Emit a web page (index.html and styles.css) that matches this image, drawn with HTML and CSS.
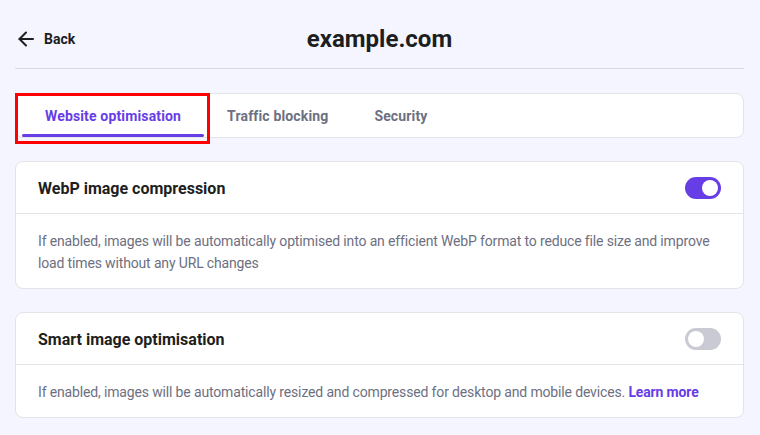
FILE: index.html
```html
<!DOCTYPE html>
<html lang="en">

<head>
    <meta charset="UTF-8">
    <meta name="viewport" content="width=device-width, initial-scale=1.0">
    <title>example.com - Image optimisation</title>
    <link rel="stylesheet" href="styles.css">
</head>

<body>
    <div class="page">
        <div class="topbar">
            <a class="back" href="#">
                <svg width="16" height="16" viewBox="0 0 16 16" fill="none" stroke="#1d1e20" stroke-width="2"
                    stroke-linecap="round" stroke-linejoin="round">
                    <path d="M15 8H1.5" />
                    <path d="M8 1.5L1.5 8L8 14.5" />
                </svg>
                <span>Back</span>
            </a>
            <h1 class="title">example.com</h1>
            <div></div>
        </div>

        <div class="tabs">
            <div class="tab active">Website optimisation<span class="mark"></span></div>
            <div class="tab">Traffic blocking</div>
            <div class="tab">Security</div>
        </div>

        <div class="card">
            <div class="card-head">
                <h2>WebP image compression</h2>
                <span class="switch on"></span>
            </div>
            <p class="card-body">If enabled, images will be automatically optimised into an efficient WebP format to
                reduce file size and improve load times without any URL changes</p>
        </div>

        <div class="card">
            <div class="card-head">
                <h2>Smart image optimisation</h2>
                <span class="switch"></span>
            </div>
            <p class="card-body">If enabled, images will be automatically resized and compressed for desktop and mobile
                devices. <a href="#">Learn more</a></p>
        </div>
    </div>
</body>

</html>
```

FILE: styles.css
```css
* {
    margin: 0;
    padding: 0;
    box-sizing: border-box;
}

body {
    background: #f4f5ff;
    font-family: Roboto, "Noto Sans", sans-serif;
    color: #1d1e20;
}

.page {
    width: 729px;
    margin-left: 15px;
}

.topbar {
    display: grid;
    grid-template-columns: 1fr auto 1fr;
    align-items: center;
    height: 49px;
    margin-top: 20px;
    padding-bottom: 10px;
    border-bottom: 1px solid #d8dae0;
}

.back {
    display: flex;
    align-items: center;
    gap: 10px;
    margin-left: 3px;
    color: #1d1e20;
    text-decoration: none;
    font-size: 14px;
    font-weight: 700;
}

.back svg {
    display: block;
}

.title {
    font-size: 24px;
    font-weight: 700;
}

.tabs {
    display: flex;
    height: 45px;
    margin-top: 24px;
    padding: 0 6px;
    background: #fff;
    border: 1px solid #e3e4e8;
    border-radius: 8px;
}

.tab {
    position: relative;
    display: flex;
    align-items: center;
    padding: 1px 23px 0;
    font-size: 14px;
    font-weight: 700;
    letter-spacing: 0.15px;
    color: #6d7081;
}

.tab.active {
    color: #673de6;
}

.tab.active::after {
    content: "";
    position: absolute;
    left: 0;
    right: 0;
    bottom: 0;
    height: 3px;
    border-radius: 2px;
    background: #673de6;
}

/* highlight frame around the selected tab */
.mark {
    position: absolute;
    left: -7px;
    top: -1px;
    width: 195px;
    height: 51px;
    border: 3px solid #ff0000;
}

.card {
    margin-top: 23px;
    background: #fff;
    border: 1px solid #e3e4e8;
    border-radius: 8px;
}

.card-head {
    display: flex;
    align-items: center;
    justify-content: space-between;
    height: 52px;
    padding: 1px 22px 0;
    border-bottom: 1px solid #e3e4e8;
}

.card-head h2 {
    font-size: 16px;
    font-weight: 700;
}

.card-body {
    padding: 16px 22px 14px;
    font-size: 14px;
    letter-spacing: -0.15px;
    line-height: 22px;
    color: #6d7081;
}

.card-body a {
    color: #673de6;
    font-weight: 700;
    text-decoration: none;
}

.switch {
    position: relative;
    width: 36px;
    height: 22px;
    border-radius: 11px;
    background: #c9cad3;
}

.switch::after {
    content: "";
    position: absolute;
    top: 3px;
    left: 3px;
    width: 16px;
    height: 16px;
    border-radius: 50%;
    background: #fff;
}

.switch.on {
    background: #673de6;
}

.switch.on::after {
    left: 17px;
}
```
